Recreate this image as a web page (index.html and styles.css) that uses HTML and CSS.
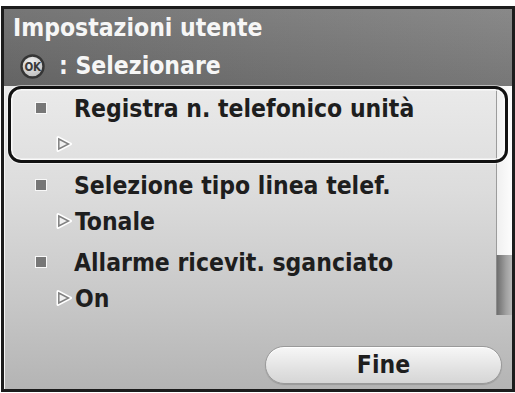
FILE: index.html
```html
<!DOCTYPE html>
<html lang="it">
<head>
<meta charset="utf-8">
<title>Impostazioni utente</title>
<link rel="stylesheet" href="styles.css">
</head>
<body>
<div class="screen">
  <header class="header">
    <div class="title">Impostazioni utente</div>
    <div class="hint"><svg class="ok-key" width="25" height="25" viewBox="0 0 25 25"><defs><radialGradient id="okg" cx="45%" cy="35%" r="65%"><stop offset="0" stop-color="#f4f4f4"/><stop offset="1" stop-color="#bdbdbd"/></radialGradient></defs><circle cx="12.5" cy="12.5" r="11" fill="url(#okg)" stroke="#353535" stroke-width="2.4"/><text x="12.5" y="16.6" text-anchor="middle" font-family="DejaVu Sans Condensed, DejaVu Sans, sans-serif" font-weight="bold" font-size="11.5" letter-spacing="-0.5" fill="#3a3a3a">OK</text></svg><span class="hint-text">: Selezionare</span></div>
  </header>
  <main class="body">
    <div class="list-wrap">
      <ul class="items">
        <li class="item">
          <div class="line1"><span class="bullet"></span><span class="label">Registra n. telefonico unità</span></div>
          <div class="line2"><svg class="tri" width="16" height="16" viewBox="0 0 16 16"><polygon points="2,1.5 14.5,8 2,14.5" fill="#ffffff" stroke="#ffffff" stroke-width="3" stroke-linejoin="round"/><polygon points="2.8,3 12.5,8 2.8,13" fill="#f0f0f0" stroke="#808080" stroke-width="1.5"/></svg><span class="value"></span></div>
        </li>
        <li class="item">
          <div class="line1"><span class="bullet"></span><span class="label">Selezione tipo linea telef.</span></div>
          <div class="line2"><svg class="tri" width="16" height="16" viewBox="0 0 16 16"><polygon points="2,1.5 14.5,8 2,14.5" fill="#ffffff" stroke="#ffffff" stroke-width="3" stroke-linejoin="round"/><polygon points="2.8,3 12.5,8 2.8,13" fill="#f0f0f0" stroke="#808080" stroke-width="1.5"/></svg><span class="value">Tonale</span></div>
        </li>
        <li class="item">
          <div class="line1"><span class="bullet"></span><span class="label">Allarme ricevit. sganciato</span></div>
          <div class="line2"><svg class="tri" width="16" height="16" viewBox="0 0 16 16"><polygon points="2,1.5 14.5,8 2,14.5" fill="#ffffff" stroke="#ffffff" stroke-width="3" stroke-linejoin="round"/><polygon points="2.8,3 12.5,8 2.8,13" fill="#f0f0f0" stroke="#808080" stroke-width="1.5"/></svg><span class="value">On</span></div>
        </li>
      </ul>
      <div class="scrollbar"><div class="thumb"></div><div class="track"></div></div>
      <div class="focus-ring"></div>
    </div>
    <div class="footer"><button class="btn">Fine</button></div>
  </main>
</div>
</body>
</html>
```

FILE: styles.css
```css
html, body {
  margin: 0;
  padding: 0;
  background: #ffffff;
}

body {
  width: 515px;
  height: 393px;
  overflow: hidden;
  font-family: "DejaVu Sans Condensed", "DejaVu Sans", sans-serif;
  font-stretch: condensed;
  font-weight: bold;
  font-size: 24.5px;
}

.screen {
  box-sizing: border-box;
  margin: 6px 0 0 1px;
  width: 514px;
  height: 386px;
  border: 3px solid #1c1c1c;
  display: flex;
  flex-direction: column;
  overflow: hidden;
}

.header {
  height: 77px;
  flex: none;
  box-sizing: border-box;
  padding-left: 9px;
  color: #f6f6f6;
  background:
    linear-gradient(to bottom, rgba(255,255,255,0.07), rgba(0,0,0,0.07)),
    linear-gradient(to right, #6b6b6b, #808080);
}

.title {
  height: 38px;
  line-height: 38px;
  white-space: nowrap;
}

.hint {
  height: 38px;
  line-height: 38px;
  display: flex;
  align-items: center;
  white-space: nowrap;
}

.ok-key {
  display: block;
  flex: none;
  margin-left: 7px;
  margin-right: 14px;
}

.body {
  flex: 1;
  display: flex;
  flex-direction: column;
  background: linear-gradient(to bottom, #eaeaea 0%, #dcdcdc 35%, #c8c8c8 70%, #b4b4b4 100%);
  box-shadow: inset 1px 0 0 #f4f4f4;
}

.list-wrap {
  position: relative;
  display: flex;
  align-items: flex-start;
}

.items {
  list-style: none;
  margin: 0;
  padding: 5px 0 0 0;
  flex: 1;
}

.item {
  padding-bottom: 5px;
  color: #1e1e1e;
}

.line1, .line2 {
  height: 36px;
  line-height: 36px;
  display: flex;
  align-items: center;
  white-space: nowrap;
}

.line1 {
  padding-left: 31px;
}

.bullet {
  box-sizing: border-box;
  width: 12px;
  height: 12px;
  margin-right: 27px;
  margin-top: -2px;
  background: #777777;
  border: 1px solid #f8f8f8;
  flex: none;
}

.line2 {
  padding-left: 52px;
}

.tri {
  display: block;
  flex: none;
  margin-right: 3px;
  margin-top: -3px;
}

.scrollbar {
  width: 16px;
  flex: none;
  display: flex;
  flex-direction: column;
}

.thumb {
  height: 169px;
  background: linear-gradient(to right, #f0f0f0, #fdfdfd);
  border-left: 1px solid #9c9c9c;
}

.track {
  height: 60px;
  background: linear-gradient(to right, #6e6e6e, #a0a0a0 60%, #b8b8b8);
  border-left: 1px solid #8a8a8a;
}

.focus-ring {
  position: absolute;
  left: 4px;
  top: 0;
  width: 500px;
  height: 77px;
  box-sizing: border-box;
  border: 3px solid #111111;
  border-radius: 13px;
  box-shadow: inset 0 0 0 1.5px #fafafa, 0 0 0 1px rgba(255,255,255,0.5);
  pointer-events: none;
}

.footer {
  display: flex;
  justify-content: flex-end;
  padding: 24px 10px 0 0;
}

.btn {
  box-sizing: border-box;
  width: 237px;
  height: 38px;
  border: 1px solid #9a9a9a;
  border-radius: 19px;
  background: linear-gradient(to bottom, #f7f7f7, #e2e2e2 60%, #d6d6d6);
  box-shadow: inset 0 1px 0 #ffffff, 0 1px 1px rgba(0,0,0,0.15);
  font: inherit;
  font-weight: bold;
  color: #1e1e1e;
  line-height: 34px;
  padding: 0;
  margin: 0;
}
```
